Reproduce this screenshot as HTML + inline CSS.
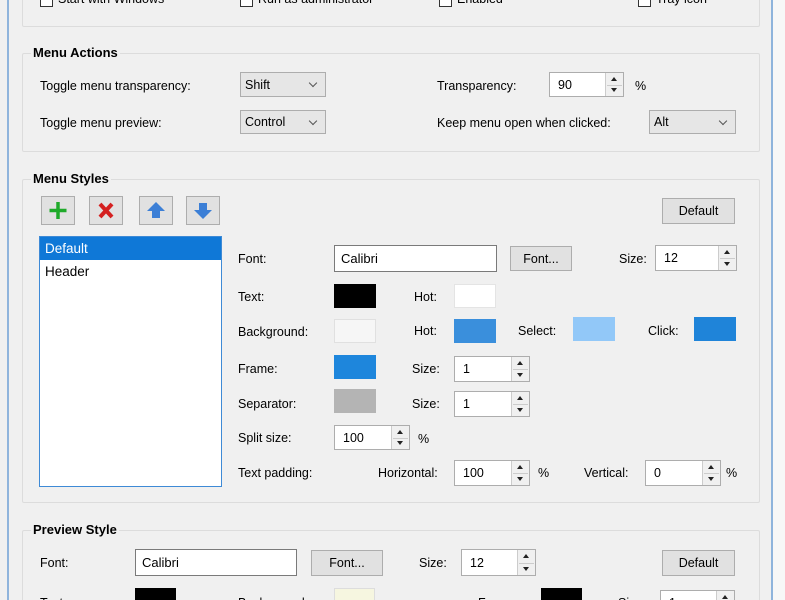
<!DOCTYPE html>
<html><head><meta charset="utf-8"><style>
*{box-sizing:border-box;margin:0;padding:0}
html,body{width:785px;height:600px;overflow:hidden}
body{background:#f0f0f0;font-family:"Liberation Sans",sans-serif;font-size:12.5px;color:#000;position:relative}
.a{position:absolute;white-space:nowrap}
.grp{position:absolute;border:1px solid #dcdcdc;border-radius:2px}
.ttl{position:absolute;font-weight:bold;font-size:13px;background:#f0f0f0;padding:0 2px}
.lbl{position:absolute;white-space:nowrap;line-height:16px}
.combo,.inp,.spin,.btn{display:flex;align-items:center}
.combo{position:absolute;background:#e6e6e6;border:1px solid #adadad;padding-left:4px}
.combo:after{content:"";position:absolute;right:9px;top:7px;width:5px;height:5px;border-right:1px solid #555;border-bottom:1px solid #555;transform:rotate(45deg)}
.inp{position:absolute;background:#fff;border:1px solid #7a7a7a;padding-left:6px}
.spin{position:absolute;background:#fff;border:1px solid #adadad;padding-left:8px}
.spin .b{position:absolute;right:0;top:0;width:18px;height:100%;border-left:1px solid #ccc;background:#f0f0f0}
.spin .b:before{content:"";position:absolute;left:5px;top:4px;border:3.5px solid transparent;border-bottom:4px solid #222;border-top:0}
.spin .b:after{content:"";position:absolute;left:5px;bottom:4px;border:3.5px solid transparent;border-top:4px solid #222;border-bottom:0}
.spin .b i{position:absolute;left:1px;right:1px;top:50%;border-top:1px solid #ccc}
.btn{position:absolute;background:#e1e1e1;border:1px solid #adadad;justify-content:center}
.sw{position:absolute;width:42px;height:24px}
.ib{position:absolute;width:34px;height:29px;background:#e1e1e1;border:1px solid #adadad}
.cb{position:absolute;width:13px;height:13px;border:1px solid #333;background:#fff;top:-6px}
</style></head><body>
<div class="a" style="left:7px;top:0;width:2px;height:600px;background:#8fb4dc"></div>
<div class="a" style="left:771px;top:0;width:2px;height:600px;background:#8fb4dc"></div>
<div class="a" style="left:773px;top:0;width:12px;height:600px;background:#f7f7f7"></div>

<div class="grp" style="left:22px;top:-10px;width:738px;height:37px"></div>
<div class="cb" style="left:40px"></div><div class="lbl" style="left:58px;top:-9px">Start with Windows</div>
<div class="cb" style="left:240px"></div><div class="lbl" style="left:258px;top:-9px">Run as administrator</div>
<div class="cb" style="left:439px"></div><div class="lbl" style="left:457px;top:-9px">Enabled</div>
<div class="cb" style="left:638px"></div><div class="lbl" style="left:656px;top:-9px">Tray icon</div>

<div class="grp" style="left:22px;top:53px;width:738px;height:99px"></div>
<div class="ttl" style="left:31px;top:45px">Menu Actions</div>
<div class="lbl" style="left:40px;top:78px">Toggle menu transparency:</div>
<div class="combo" style="left:240px;top:72px;width:86px;height:25px">Shift</div>
<div class="lbl" style="left:40px;top:115px">Toggle menu preview:</div>
<div class="combo" style="left:240px;top:110px;width:86px;height:24px">Control</div>
<div class="lbl" style="left:437px;top:78px">Transparency:</div>
<div class="spin" style="left:549px;top:72px;width:75px;height:25px">90<div class="b"><i></i></div></div>
<div class="lbl" style="left:635px;top:78px">%</div>
<div class="lbl" style="left:437px;top:115px">Keep menu open when clicked:</div>
<div class="combo" style="left:649px;top:110px;width:87px;height:24px">Alt</div>

<div class="grp" style="left:22px;top:179px;width:738px;height:324px"></div>
<div class="ttl" style="left:31px;top:171px">Menu Styles</div>
<div class="ib" style="left:41px;top:196px"><svg width="32" height="27"><path d="M16 5v17M7.5 13.5h17" stroke="#1faa2a" stroke-width="3.5"/></svg></div>
<div class="ib" style="left:89px;top:196px"><svg width="32" height="27"><path d="M10 7l12 13M22 7L10 20" stroke="#d42020" stroke-width="4"/></svg></div>
<div class="ib" style="left:139px;top:196px"><svg width="32" height="27"><path d="M16 5l9 9h-5v7h-8v-7H7z" fill="#3c7fd6"/></svg></div>
<div class="ib" style="left:186px;top:196px"><svg width="32" height="27"><path d="M16 22l9-9h-5V6h-8v7H7z" fill="#3c7fd6"/></svg></div>
<div class="btn" style="left:662px;top:198px;width:73px;height:26px">Default</div>

<div class="a" style="left:39px;top:236px;width:183px;height:251px;background:#fff;border:1px solid #3e8ad6"></div>
<div class="a" style="left:40px;top:237px;width:181px;height:23px;background:#0f78d7;color:#fff;padding-left:5px;line-height:23px;font-size:13.5px">Default</div>
<div class="lbl" style="left:45px;top:264px;font-size:13.5px">Header</div>

<div class="lbl" style="left:238px;top:251px">Font:</div>
<div class="inp" style="left:334px;top:245px;width:163px;height:27px;font-size:13px">Calibri</div>
<div class="btn" style="left:510px;top:246px;width:62px;height:25px">Font...</div>
<div class="lbl" style="left:619px;top:251px">Size:</div>
<div class="spin" style="left:655px;top:245px;width:82px;height:26px">12<div class="b"><i></i></div></div>

<div class="lbl" style="left:238px;top:289px">Text:</div>
<div class="sw" style="left:334px;top:284px;background:#000"></div>
<div class="lbl" style="left:414px;top:289px">Hot:</div>
<div class="sw" style="left:454px;top:284px;background:#fff;border:1px solid #e4e4e4"></div>

<div class="lbl" style="left:238px;top:324px">Background:</div>
<div class="sw" style="left:334px;top:319px;background:#f6f6f6;border:1px solid #e0e0e0"></div>
<div class="lbl" style="left:414px;top:323px">Hot:</div>
<div class="sw" style="left:454px;top:319px;background:#3a8fdc"></div>
<div class="lbl" style="left:518px;top:323px">Select:</div>
<div class="sw" style="left:573px;top:317px;background:#92c8f8"></div>
<div class="lbl" style="left:648px;top:323px">Click:</div>
<div class="sw" style="left:694px;top:317px;background:#1f84d9"></div>

<div class="lbl" style="left:238px;top:361px">Frame:</div>
<div class="sw" style="left:334px;top:355px;background:#1e86dc"></div>
<div class="lbl" style="left:412px;top:361px">Size:</div>
<div class="spin" style="left:454px;top:356px;width:76px;height:26px">1<div class="b"><i></i></div></div>

<div class="lbl" style="left:238px;top:396px">Separator:</div>
<div class="sw" style="left:334px;top:389px;background:#b4b4b4"></div>
<div class="lbl" style="left:412px;top:396px">Size:</div>
<div class="spin" style="left:454px;top:391px;width:76px;height:26px">1<div class="b"><i></i></div></div>

<div class="lbl" style="left:238px;top:430px">Split size:</div>
<div class="spin" style="left:334px;top:425px;width:76px;height:25px">100<div class="b"><i></i></div></div>
<div class="lbl" style="left:418px;top:431px">%</div>

<div class="lbl" style="left:238px;top:465px">Text padding:</div>
<div class="lbl" style="left:378px;top:465px">Horizontal:</div>
<div class="spin" style="left:454px;top:460px;width:76px;height:26px">100<div class="b"><i></i></div></div>
<div class="lbl" style="left:538px;top:465px">%</div>
<div class="lbl" style="left:584px;top:465px">Vertical:</div>
<div class="spin" style="left:645px;top:460px;width:76px;height:26px">0<div class="b"><i></i></div></div>
<div class="lbl" style="left:726px;top:465px">%</div>

<div class="grp" style="left:22px;top:530px;width:738px;height:90px"></div>
<div class="ttl" style="left:31px;top:522px">Preview Style</div>
<div class="lbl" style="left:40px;top:555px">Font:</div>
<div class="inp" style="left:135px;top:549px;width:162px;height:27px;font-size:13px">Calibri</div>
<div class="btn" style="left:311px;top:550px;width:72px;height:26px">Font...</div>
<div class="lbl" style="left:419px;top:555px">Size:</div>
<div class="spin" style="left:461px;top:549px;width:75px;height:27px">12<div class="b"><i></i></div></div>
<div class="btn" style="left:662px;top:550px;width:73px;height:26px">Default</div>

<div class="lbl" style="left:40px;top:595px">Text:</div>
<div class="sw" style="left:135px;top:588px;background:#000;width:41px"></div>
<div class="lbl" style="left:238px;top:595px">Background:</div>
<div class="sw" style="left:334px;top:588px;background:#f6f6e0;border:1px solid #ddd;width:41px"></div>
<div class="lbl" style="left:478px;top:595px">Frame:</div>
<div class="sw" style="left:541px;top:588px;background:#000;width:41px"></div>
<div class="lbl" style="left:618px;top:595px">Size:</div>
<div class="spin" style="left:660px;top:590px;width:75px;height:26px">1<div class="b"><i></i></div></div>
</body></html>
